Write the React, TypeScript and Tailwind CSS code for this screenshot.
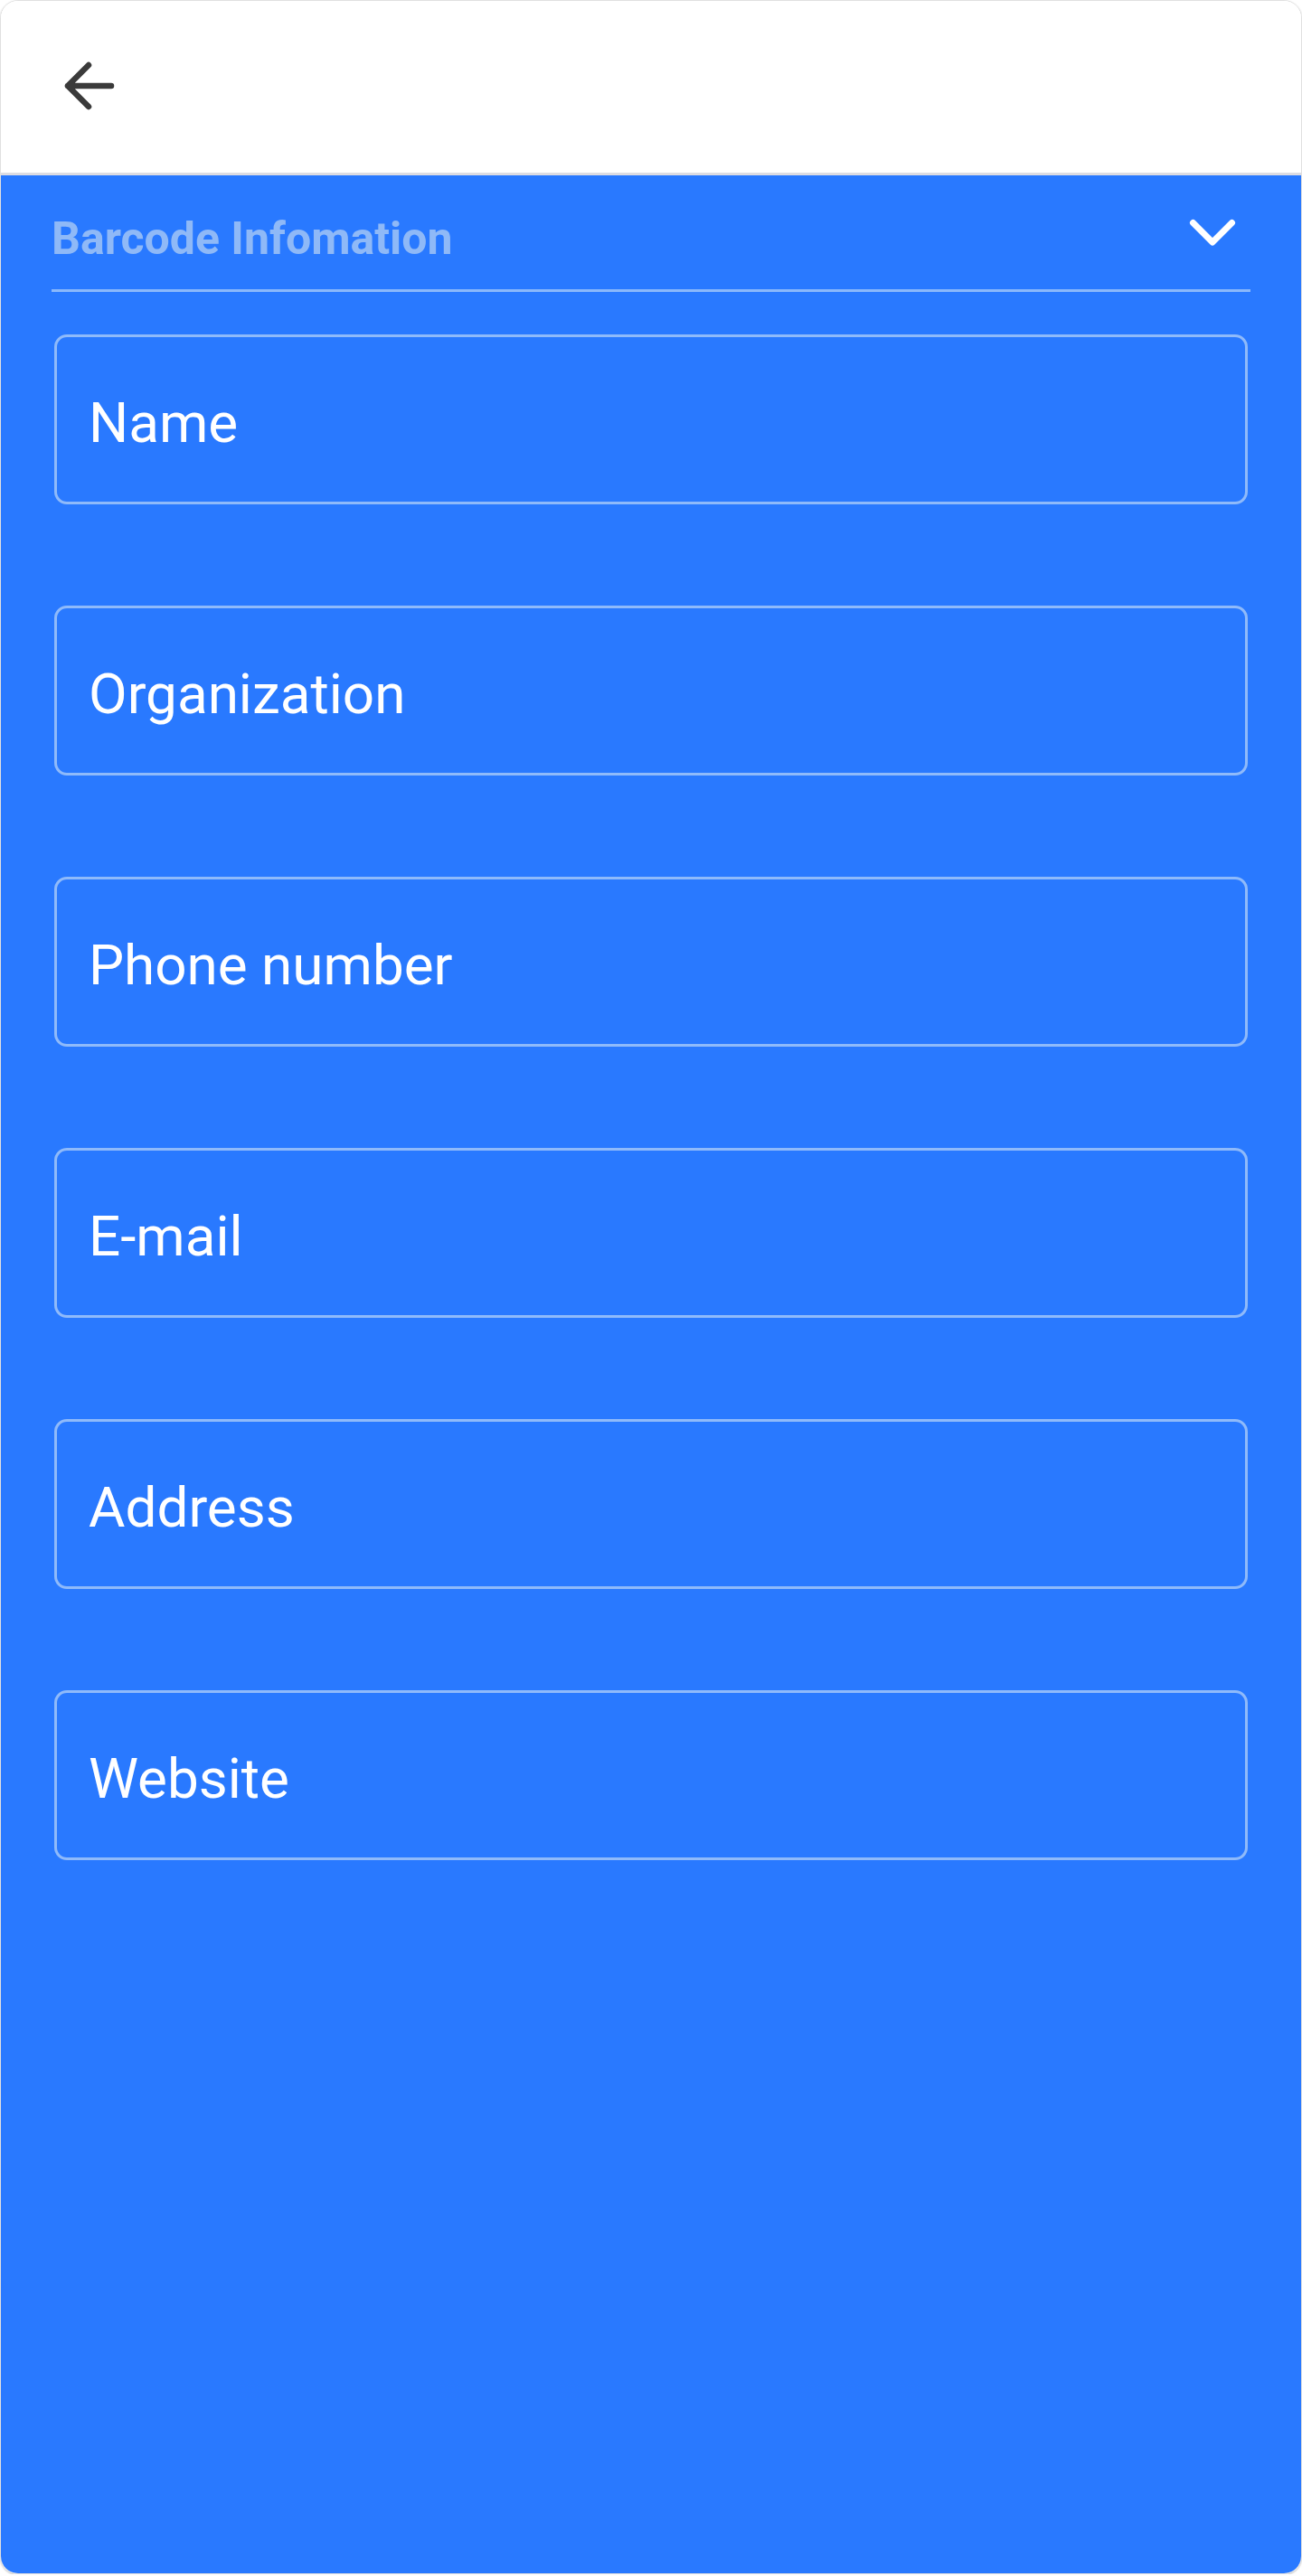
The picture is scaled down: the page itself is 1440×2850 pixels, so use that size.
const fields = ["Name", "Organization", "Phone number", "E-mail", "Address", "Website"];

export default function App() {
  return (
    <div className="bg-white font-['Roboto',sans-serif]">
      <div className="flex h-[2848px] w-full flex-col overflow-hidden rounded-[20px] border border-[#e0e0e0] shadow-[0_1px_2px_rgba(0,0,0,0.25)]">
        {/* Toolbar */}
        <header className="h-[193px] shrink-0 border-b-[3px] border-[#dcdce2] bg-white pl-[65px] pt-[61px]">
          <svg width="66" height="66" viewBox="0 0 66 66" fill="none" aria-hidden="true">
            <path
              d="M9 33H57M9 33L32 10M9 33L32 56"
              stroke="#3a3a3a"
              strokeWidth={6.5}
              strokeLinecap="round"
              strokeLinejoin="round"
            />
          </svg>
        </header>

        {/* Form */}
        <main className="flex-1 bg-[#2979ff] px-[56px] pt-[45px]">
          <div className="flex items-start justify-between">
            <h2 className="text-[50px] leading-none font-bold text-[#8fb9f7]">Barcode Infomation</h2>
            <svg className="mr-[14px]" width="56" height="36" viewBox="0 0 56 36" fill="none" aria-hidden="true">
              <path d="M6.5 7.5L28 29L49.5 7.5" stroke="white" strokeWidth={7} strokeLinecap="round" strokeLinejoin="round" />
            </svg>
          </div>
          <div className="mt-[31px] h-[3px] bg-[#8ab8fb]" />

          <div className="mx-[3px] mt-[47px] flex flex-col gap-[112px]">
            {fields.map((f) => (
              <input
                key={f}
                placeholder={f}
                className="h-[188px] w-full rounded-[14px] border-[3px] border-[#8fbafa] bg-transparent pl-[35px] pt-[6px] text-[62px] text-white outline-none placeholder:text-white"
              />
            ))}
          </div>
        </main>
      </div>
    </div>
  );
}
